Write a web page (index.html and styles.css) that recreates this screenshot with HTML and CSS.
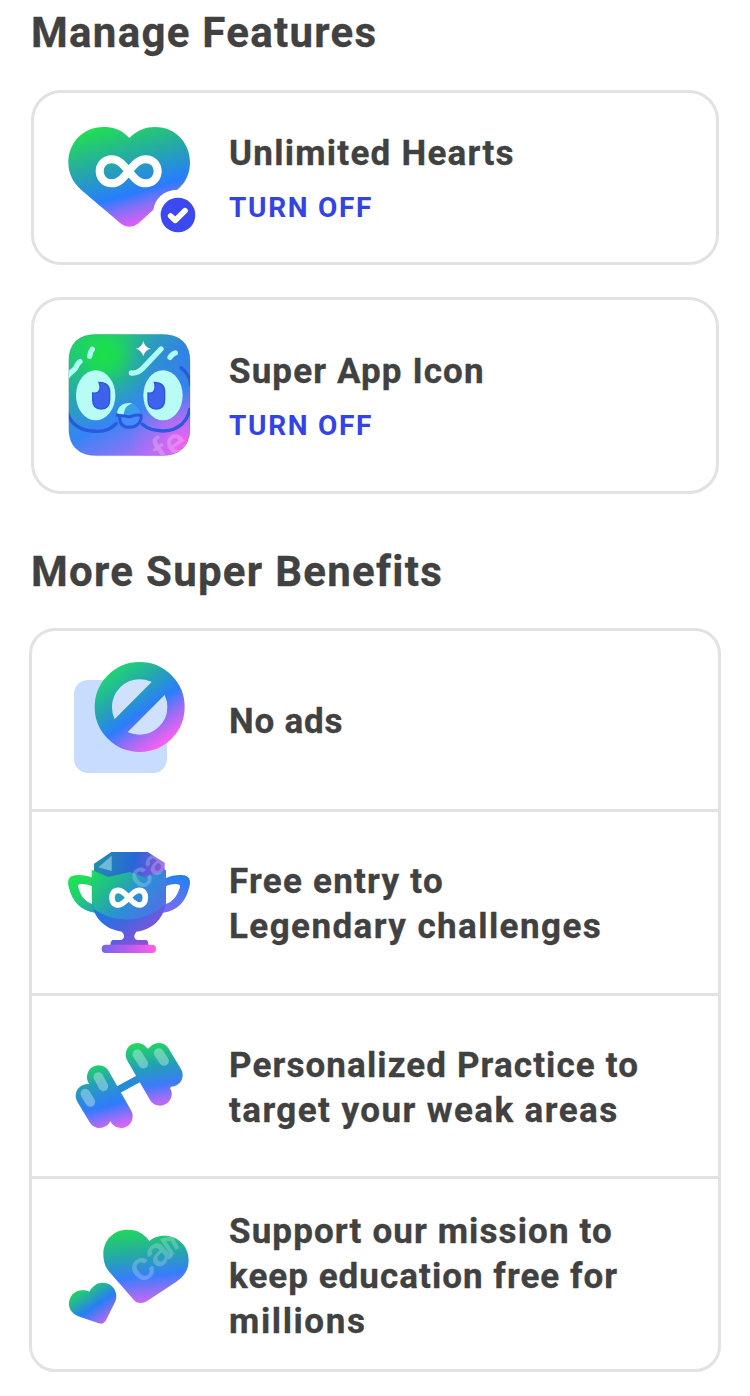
FILE: index.html
```html
<!DOCTYPE html>
<html lang="en">
<head>
<meta charset="utf-8">
<title>Super features</title>
<link rel="stylesheet" href="styles.css">
</head>
<body>
<main class="page">
  <h1 class="heading">Manage Features</h1>

  <section class="card card-hearts">
    <svg class="icon" width="150" height="140" viewBox="30 0 450 420">
      <defs>
        <linearGradient id="gh" gradientUnits="userSpaceOnUse" x1="150" y1="55" x2="235" y2="350">
          <stop offset="0" stop-color="#22dc55"/><stop offset=".36" stop-color="#25a9a7"/><stop offset=".7" stop-color="#287cff"/><stop offset=".83" stop-color="#8370f5"/><stop offset="1" stop-color="#e25cf5"/>
        </linearGradient>
      </defs>
      <path fill="url(#gh)" d="M238 84C213 57 187 51 160 51C100 51 55 98 55 157C55 191 69 218 94 240L213 341Q238 360 264 341L310 299C316 264 340 241 382 239C406 220 420 191 420 157C420 98 375 51 316 51C288 51 262 60 238 84Z"/>
      <path class="line white" stroke-width="24" d="M236 184C219 164 207 148 185 148C163 148 149 164 149 184C149 204 163 220 185 220C207 220 219 204 236 184C253 164 265 148 287 148C309 148 323 164 323 184C323 204 309 220 287 220C265 220 253 204 236 184Z"/>
      <circle cx="384" cy="315" r="52" fill="#3c49f0"/>
      <path class="line white" stroke-width="17" d="M362 318L376 331L405 302"/>
    </svg>
    <div class="copy"><h2 class="title">Unlimited Hearts</h2><a class="action">TURN OFF</a></div>
  </section>

  <section class="card card-app">
    <svg class="icon" width="150" height="150" viewBox="15 0 450 450">
      <defs>
        <linearGradient id="ga" gradientUnits="userSpaceOnUse" x1="100" y1="60" x2="270" y2="430">
          <stop offset="0" stop-color="#20d070"/><stop offset=".35" stop-color="#26a6b0"/><stop offset=".62" stop-color="#3585f5"/><stop offset=".85" stop-color="#8276f6"/><stop offset="1" stop-color="#c968f2"/>
        </linearGradient>
        <radialGradient id="ga2" gradientUnits="userSpaceOnUse" cx="148" cy="108" r="150">
          <stop offset="0" stop-color="#1be044"/><stop offset=".3" stop-color="#1be04a" stop-opacity=".75"/><stop offset=".65" stop-color="#20d060" stop-opacity=".25"/><stop offset="1" stop-color="#20d066" stop-opacity="0"/>
        </radialGradient>
        <radialGradient id="ga3" gradientUnits="userSpaceOnUse" cx="385" cy="370" r="170">
          <stop offset="0" stop-color="#f062ee"/><stop offset="1" stop-color="#b46cf6" stop-opacity="0"/>
        </radialGradient>
        <radialGradient id="ga4" gradientUnits="userSpaceOnUse" cx="390" cy="110" r="200">
          <stop offset="0" stop-color="#3480e8"/><stop offset="1" stop-color="#3480e8" stop-opacity="0"/>
        </radialGradient>
        <clipPath id="ca"><path id="tile" d="M126 43H318Q405 43 405 126V322Q405 407 318 407H126Q41 407 41 322V126Q41 43 126 43Z"/></clipPath>
      </defs>
      <g clip-path="url(#ca)">
        <path fill="url(#ga)" d="M40 40H406V408H40Z"/>
        <path fill="url(#ga4)" d="M40 40H406V408H40Z"/>
        <path fill="url(#ga2)" d="M40 40H406V408H40Z"/>
        <path fill="url(#ga3)" d="M40 40H406V408H40Z"/>
        <path class="line" stroke="#2859df" stroke-width="10" d="M38 280C52 325 92 334 126 334C153 334 171 325 183 311M262 313C283 331 303 333 325 333C374 331 399 300 404 268M378 143C397 157 405 174 407 194"/>
        <path class="line" stroke="#b0fff5" stroke-width="16" d="M36 170C44 158 54 154 61 145C66 138 65 132 75 125M104 109Q105 96 112 88M229 159C242 160 254 155 264 144L318 87M345 112Q351 102 361 99"/>
        <ellipse cx="122" cy="226" rx="59" ry="75" fill="#b9fcf5"/>
        <ellipse cx="324" cy="226" rx="59" ry="75" fill="#b9fcf5"/>
        <g fill="#3e62ec" stroke="#2859df" stroke-width="4">
          <path d="M132 187Q164 187 164 216V238Q164 267 139 267Q113 267 113 240V219Q133 222 135 204Q136 195 132 187Z"/>
          <path d="M298 187Q329 187 329 216V238Q329 267 304 267Q279 267 279 240V219Q298 222 300 204Q301 195 298 187Z"/>
        </g>
        <path fill="#3a9de8" d="M186 287C189 264 203 249 224 249C242 251 254 268 258 285L224 290Z"/>
        <path fill="#a9fff0" d="M186 280C189 257 207 246 232 250C214 257 208 266 206 286Z"/>
        <path fill="#478bff" stroke="#2859df" stroke-width="9" stroke-linecap="round" stroke-linejoin="round" d="M186 286C199 289 207 286 218 290Q226 292 235 287Q246 284 258 286C261 306 246 322 223 322C203 322 193 309 194 291"/>
        <path fill="#fff" d="M265 63Q269 82 287 86Q269 91 265 109Q260 91 243 86Q261 82 265 63Z"/>
        <text class="mark" x="325" y="437" font-size="112" transform="rotate(-35 325 437)">fe</text>
      </g>
      <use href="#tile" fill="none" stroke="#2563a0" stroke-opacity=".35" stroke-width="2"/>
    </svg>
    <div class="copy"><h2 class="title snug">Super App Icon</h2><a class="action">TURN OFF</a></div>
  </section>

  <h1 class="heading heading-more">More Super Benefits</h1>

  <ul class="list">
    <li class="row row-ads">
      <svg class="icon" width="150" height="135" viewBox="0 0 450 405">
        <defs>
          <linearGradient id="gn" gradientUnits="userSpaceOnUse" x1="155" y1="70" x2="305" y2="285">
            <stop offset="0" stop-color="#20d276"/><stop offset=".28" stop-color="#24a8ad"/><stop offset=".57" stop-color="#2b7dfb"/><stop offset=".76" stop-color="#956df4"/><stop offset="1" stop-color="#f760f0"/>
          </linearGradient>
        </defs>
        <rect x="42" y="90" width="279" height="279" rx="42" fill="#c8dcff"/>
        <circle cx="239" cy="171" r="98" fill="#cfe1ff"/>
        <circle cx="239" cy="171" r="109" fill="none" stroke="url(#gn)" stroke-width="52"/>
        <path stroke="url(#gn)" stroke-width="55" d="M168 242L310 100"/>
      </svg>
      <p class="copy title tight">No ads</p>
    </li>
    <li class="row row-trophy">
      <svg class="icon" width="150" height="125" viewBox="15 0 450 375">
        <defs>
          <linearGradient id="gt" gradientUnits="userSpaceOnUse" x1="95" y1="90" x2="300" y2="270">
            <stop offset="0" stop-color="#1fe453"/><stop offset=".3" stop-color="#20bb8d"/><stop offset=".58" stop-color="#2c8ed8"/><stop offset="1" stop-color="#5a68e8"/>
          </linearGradient>
          <linearGradient id="gt2" gradientUnits="userSpaceOnUse" x1="120" y1="40" x2="325" y2="110">
            <stop offset="0" stop-color="#2093a5"/><stop offset=".55" stop-color="#2866d7"/><stop offset="1" stop-color="#9950df"/>
          </linearGradient>
          <linearGradient id="gt3" gradientUnits="userSpaceOnUse" x1="140" y1="0" x2="300" y2="0">
            <stop offset="0" stop-color="#7665ec"/><stop offset=".5" stop-color="#ba5cef"/><stop offset="1" stop-color="#ff5ee5"/>
          </linearGradient>
          <linearGradient id="gt4" gradientUnits="userSpaceOnUse" x1="60" y1="110" x2="110" y2="215">
            <stop offset="0" stop-color="#1fe251"/><stop offset=".5" stop-color="#20d170"/><stop offset="1" stop-color="#25a5b0"/>
          </linearGradient>
          <linearGradient id="gt5" gradientUnits="userSpaceOnUse" x1="370" y1="110" x2="350" y2="215">
            <stop offset="0" stop-color="#267ff5"/><stop offset="1" stop-color="#796bf3"/>
          </linearGradient>
          <linearGradient id="gt6" gradientUnits="userSpaceOnUse" x1="160" y1="210" x2="240" y2="320">
            <stop offset="0" stop-color="#2473e0"/><stop offset=".45" stop-color="#4565e0"/><stop offset="1" stop-color="#8a50dc"/>
          </linearGradient>
          <clipPath id="cup"><path d="M110 90L160 111L225 96L268 112L333 90V174C333 232 295 269 244 275C235 288 236 295 247 300H275Q280 303 280 316H166Q166 304 173 300H198C209 295 211 286 200 275C150 268 110 232 110 174Z"/></clipPath>
        </defs>
        <path fill="url(#gt2)" d="M169 36H278L329 68V115H117V71Z"/>
        <path fill="#6db9d8" d="M130 82L170 47V93Z"/>
        <path fill="url(#gt4)" fill-rule="evenodd" d="M112 113C92 105 68 102 51 108C37 114 38 130 42 144C51 184 79 214 120 218V195C112 191 112 186 112 180ZM112 139C97 133 84 131 73 133C67 136 69 143 72 148C79 172 93 186 112 192Z"/>
        <path fill="url(#gt5)" fill-rule="evenodd" d="M332 115C353 104 382 103 394 108C407 114 407 130 402 144C393 184 366 214 324 218V195C332 191 332 186 332 180ZM332 139C347 133 361 130 373 134C377 137 375 144 371 152C363 173 350 186 332 192Z"/>
        <g clip-path="url(#cup)">
          <path fill="url(#gt6)" d="M100 80H340V322H100Z"/>
          <path fill="url(#gt)" d="M100 80H340V182C285 250 180 256 113 204Z"/>
        </g>
        <rect x="140" y="314" width="163" height="25" rx="12" fill="url(#gt3)"/>
        <path class="line white" stroke-width="17" d="M221 173C208 158 200 151 190 151C177 151 171 160 171 173C171 186 177 195 190 195C200 195 208 188 221 173C234 158 242 151 252 151C265 151 271 160 271 173C271 186 265 195 252 195C242 195 234 188 221 173Z"/>
        <text class="mark" x="258" y="154" font-size="110" transform="rotate(-43 258 154)">ca</text>
      </svg>
      <p class="copy title">Free entry to<br><span class="wide">Legendary challenges</span></p>
    </li>
    <li class="row row-practice">
      <svg class="icon" width="150" height="110" viewBox="0 0 450 330">
        <defs>
          <linearGradient id="gd" gradientUnits="userSpaceOnUse" x1="220" y1="38" x2="248" y2="225">
            <stop offset="0" stop-color="#20dd58"/><stop offset=".43" stop-color="#239dba"/><stop offset=".72" stop-color="#3d7bfa"/><stop offset="1" stop-color="#b96af5"/>
          </linearGradient>
          <linearGradient id="gd2" gradientUnits="userSpaceOnUse" x1="108" y1="103" x2="158" y2="295">
            <stop offset="0" stop-color="#20d464"/><stop offset=".3" stop-color="#269dba"/><stop offset=".65" stop-color="#307bfd"/><stop offset="1" stop-color="#dc66f4"/>
          </linearGradient>
        </defs>
        <path stroke="#268bd7" stroke-width="22" d="M168 183L255 136"/>
        <g class="line" stroke="url(#gd)" stroke-width="70">
          <path d="M232 74L300 192M296 74L333 135M265 90L305 150"/>
        </g>
        <g class="line" stroke="url(#gd2)" stroke-width="70">
          <path d="M116 141L183 259M82 197L119 259M116 190L140 230"/>
        </g>
        <g class="line" stroke="#e0fff5" stroke-opacity=".37" stroke-width="29">
          <path d="M232 73L250 101M296 69L312 93M115 141L130 169M76 191L91 216"/>
        </g>
      </svg>
      <p class="copy title"><span class="snug">Personalized Practice to</span><br><span class="wide">target your weak areas</span></p>
    </li>
    <li class="row row-mission">
      <svg class="icon" width="150" height="120" viewBox="0 0 450 360">
        <defs>
          <linearGradient id="gm" gradientUnits="userSpaceOnUse" x1="215" y1="43" x2="240" y2="263">
            <stop offset="0" stop-color="#22d75c"/><stop offset=".38" stop-color="#25a5ad"/><stop offset=".65" stop-color="#367efb"/><stop offset="1" stop-color="#c967f3"/>
          </linearGradient>
          <linearGradient id="gm2" gradientUnits="userSpaceOnUse" x1="65" y1="218" x2="140" y2="327">
            <stop offset="0" stop-color="#1fd65e"/><stop offset=".52" stop-color="#287ef5"/><stop offset="1" stop-color="#cb65ee"/>
          </linearGradient>
        </defs>
        <path fill="url(#gm)" d="M268 78C250 52 228 44 203 44C161 44 130 75 130 117C130 140 136 158 151 174L219 252Q233 271 258 260L349 200C374 183 386 163 386 135C386 93 354 62 313 62C292 62 278 69 268 78Z"/>
        <path fill="url(#gm2)" d="M88 230C97 213 111 203 128 203C152 203 169 221 169 244C169 256 164 264 158 275L138 316Q130 330 116 325L61 306C39 299 27 285 27 267C27 243 45 226 66 226C75 226 82 227 88 230Z"/>
        <text class="mark" x="246" y="209" font-size="124" transform="rotate(-43 246 209)">ca</text>
        <path stroke="#fff" stroke-opacity=".22" stroke-width="12" fill="none" d="M339 120L309 76L335 70L352 102"/>
      </svg>
      <p class="copy title"><span class="snug">Support our mission to</span><br><span class="snugger">keep education free for</span><br><span class="wider">millions</span></p>
    </li>
  </ul>
</main>
</body>
</html>
```
FILE: styles.css
```css
* { box-sizing: border-box; }

body {
  margin: 0;
  background: #fff;
  color: #414142;
  font-family: Roboto, "Liberation Sans", sans-serif;
}

.page {
  display: flow-root;
  width: 750px;
  height: 1396px;
}

.heading {
  margin: 8px 31px 32px;
  font-size: 42px;
  font-weight: 700;
  line-height: 50px;
  letter-spacing: 1.28px;
  white-space: nowrap;
  -webkit-text-stroke: .3px currentColor;
}

.heading-more { margin: 53px 31px 31px; }

.card {
  display: flex;
  align-items: center;
  width: 688px;
  margin-left: 31px;
  padding-left: 26px;
  border: 3px solid #e2e2e2;
  border-radius: 30px;
}

.card-hearts { height: 175px; }
.card-hearts .icon { margin-top: 5px; }
.card-app { height: 197px; margin-top: 32px; }
.card-app .icon { margin-top: -1px; }

.icon {
  display: block;
  flex: none;
}

.copy {
  margin: 2px 0 0 19px;
  white-space: nowrap;
}

.title {
  font-size: 35px;
  font-weight: 700;
  line-height: 45px;
  letter-spacing: 1.25px;
  -webkit-text-stroke: .3px currentColor;
}

.tight { letter-spacing: .8px; }
.snugger { letter-spacing: 1.03px; }
.snug { letter-spacing: 1.11px; }
.wide { letter-spacing: 1.42px; }
.wider { letter-spacing: 1.6px; }

h2.title { margin: 0 0 14px; }

.action {
  display: block;
  color: #3443e4;
  font-size: 28px;
  font-weight: 700;
  line-height: 36px;
  letter-spacing: 1.7px;
}

.list {
  width: 692px;
  height: 744px;
  margin: 0 0 0 29px;
  padding: 0;
  border: 3px solid #e2e2e2;
  border-radius: 26px;
  list-style: none;
}

.row {
  display: flex;
  align-items: center;
  height: 184px;
  padding-left: 28px;
  border-top: 3px solid #e2e2e2;
}

.row-ads { height: 178px; border-top: 0; }
.row-ads .icon { margin-top: -5px; }
.row-trophy .copy { margin-top: 3px; }
.row-practice { height: 183px; }
.row-practice .icon { margin-top: -2px; }
.row-practice .copy { margin-top: 4px; }
.row-mission { height: 193px; }
.row-mission .icon { margin-top: 2px; }
.row-mission .copy { margin-top: 5px; }

.line {
  fill: none;
  stroke-linecap: round;
  stroke-linejoin: round;
}

.white { stroke: #fff; }

.mark {
  fill: #fff;
  fill-opacity: .23;
  font-family: Roboto, sans-serif;
  font-weight: 500;
}
```
